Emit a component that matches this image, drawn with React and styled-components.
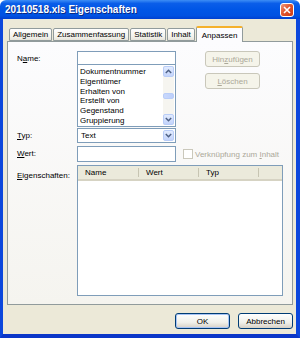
import React from "react";
import styled, { createGlobalStyle } from "styled-components";

const GlobalStyle = createGlobalStyle`
  html, body {
    margin: 0;
    padding: 0;
    background: #ffffff;
  }
  body {
    font-family: "Liberation Sans", Arial, sans-serif;
    font-size: 8px;
    color: #000;
  }
`;

const Window = styled.div`
  width: 300px;
  height: 338px;
  display: flex;
  flex-direction: column;
  overflow: hidden;
`;

const TitleBar = styled.div`
  height: 20px;
  display: flex;
  align-items: center;
  padding: 0 6px 0 5px;
  background: linear-gradient(#3d8ef5 0%, #0a5ee9 18%, #0056e6 50%, #0052e2 82%, #0040d0 100%);
  border-radius: 6px 6px 0 0;
`;

const Title = styled.span`
  flex: 1;
  font-size: 10px;
  font-weight: bold;
  color: #fff;
  text-shadow: 1px 1px 0 #0a2a86;
  white-space: nowrap;
`;

const CloseButton = styled.div`
  width: 12px;
  height: 12px;
  border: 1px solid #fff;
  border-radius: 3px;
  background: linear-gradient(135deg, #f09a7c 0%, #e0562f 45%, #cc3a12 100%);
  display: flex;
  align-items: center;
  justify-content: center;
`;

const Frame = styled.div`
  flex: 1;
  display: flex;
  flex-direction: column;
  background: #ece9d8;
  border-left: 3px solid #0c47dc;
  border-right: 4px solid #0c47dc;
  border-bottom: 4px solid #0a36c8;
  padding: 7px 0 5px 4px;
`;

const TabStrip = styled.div`
  display: flex;
  align-items: flex-end;
  height: 16px;
  padding-left: 2px;
  margin-bottom: -1px;
  position: relative;
  z-index: 1;
`;

const Tab = styled.div`
  height: ${(p) => (p.active ? "16px" : "13px")};
  margin-bottom: ${(p) => (p.active ? "0" : "1px")};
  margin-right: ${(p) => (p.active ? "0" : "1px")};
  padding: 0 ${(p) => (p.active ? "5px" : "3px")};
  box-sizing: border-box;
  display: flex;
  align-items: center;
  justify-content: center;
  border: 1px solid #919b9c;
  border-bottom: ${(p) => (p.active ? "none" : "1px solid #919b9c")};
  border-top: ${(p) => (p.active ? "2px solid #f5b12d" : "1px solid #919b9c")};
  border-radius: 2px 2px 0 0;
  background: ${(p) =>
    p.active ? "#fcfcfe" : "linear-gradient(#ffffff, #f3f2ec 70%, #e6e4da)"};
  white-space: nowrap;
`;

const Panel = styled.div`
  width: 286px;
  height: 264px;
  box-sizing: border-box;
  border: 1px solid #919b9c;
  background: linear-gradient(#fcfcfe, #f5f4ef);
  padding: 9px 8px 8px 9px;
  display: flex;
  flex-direction: column;
`;

const Row = styled.div`
  display: flex;
  align-items: flex-start;
  margin-top: ${(p) => p.gap || 0}px;
`;

const Label = styled.div`
  width: 60px;
  flex-shrink: 0;
  padding-top: ${(p) => p.top || 3}px;
  white-space: nowrap;
`;

const U = styled.span`
  text-decoration: underline;
`;

const NameBlock = styled.div`
  width: 99px;
  display: flex;
  flex-direction: column;
`;

const TextBox = styled.div`
  width: ${(p) => p.w || 99}px;
  height: ${(p) => p.h || 14}px;
  box-sizing: border-box;
  border: 1px solid #7f9db9;
  background: #fff;
`;

const ListBox = styled.div`
  height: 62px;
  box-sizing: border-box;
  border: 1px solid #7f9db9;
  border-top: none;
  background: #fff;
  display: flex;
`;

const ListItems = styled.div`
  flex: 1;
  padding: 2px 0 0 2px;
  display: flex;
  flex-direction: column;
`;

const ListItem = styled.div`
  height: 10px;
  line-height: 10px;
  white-space: nowrap;
  overflow: hidden;
`;

const ScrollBar = styled.div`
  width: 11px;
  margin: 1px 1px 1px 0;
  background: #f6f5f0;
  display: flex;
  flex-direction: column;
  justify-content: space-between;
`;

const ScrollButton = styled.div`
  width: 11px;
  height: 11px;
  box-sizing: border-box;
  border: 1px solid #b9cdf8;
  border-radius: 2px;
  background: linear-gradient(#e2ebfe, #c3d4fb);
  display: flex;
  align-items: center;
  justify-content: center;
`;

const Thumb = styled.div`
  width: 11px;
  height: 6px;
  box-sizing: border-box;
  border: 1px solid #b9cdf8;
  border-radius: 2px;
  background: linear-gradient(90deg, #c9d8fc, #bccffb);
`;

const SideButtons = styled.div`
  margin-left: 29px;
  display: flex;
  flex-direction: column;
  gap: 6px;
`;

const Button = styled.div`
  width: ${(p) => p.w || 55}px;
  height: 16px;
  box-sizing: border-box;
  border: 1px solid ${(p) => (p.disabled ? "#c9c7ba" : "#003c74")};
  border-radius: 3px;
  background: ${(p) =>
    p.disabled ? "#f5f4ea" : "linear-gradient(#ffffff, #f0f0ea 60%, #d6d0c5)"};
  color: ${(p) => (p.disabled ? "#aca899" : "#000")};
  display: flex;
  align-items: center;
  justify-content: center;
  white-space: nowrap;
  box-shadow: ${(p) => (p.focus ? "inset 0 0 0 1px #a7c4f5" : "none")};
`;

const Combo = styled.div`
  width: 99px;
  height: 15px;
  box-sizing: border-box;
  border: 1px solid #7f9db9;
  background: #fff;
  display: flex;
  align-items: center;
  padding: 0 1px 0 3px;
`;

const ComboText = styled.span`
  flex: 1;
`;

const CheckWrap = styled.div`
  display: flex;
  align-items: center;
  margin-left: 7px;
  padding-top: 3px;
  color: #aca899;
  white-space: nowrap;
`;

const CheckBox = styled.div`
  width: 10px;
  height: 10px;
  box-sizing: border-box;
  border: 1px solid #cac8bb;
  background: #fff;
  margin-right: 2px;
`;

const ListView = styled.div`
  width: 206px;
  height: 131px;
  box-sizing: border-box;
  border: 1px solid #7f9db9;
  background: #fff;
  margin-top: -3px;
`;

const Header = styled.div`
  height: 15px;
  display: flex;
  background: #ebeadb;
  border-bottom: 2px solid #d6d3c3;
  box-sizing: border-box;
`;

const HeaderCell = styled.div`
  width: ${(p) => p.w}px;
  box-sizing: border-box;
  padding-left: 7px;
  display: flex;
  align-items: center;
  border-right: 1px solid #c7c5b2;
  margin: 2px 0;
`;

const Footer = styled.div`
  display: flex;
  justify-content: flex-end;
  gap: 8px;
  margin-top: 8px;
  padding-right: 3px;
`;

const Chevron = ({ down }) => (
  <svg width="7" height="5" viewBox="0 0 7 5">
    <path
      d={down ? "M0.8 1 L3.5 3.7 L6.2 1" : "M0.8 4 L3.5 1.3 L6.2 4"}
      fill="none"
      stroke="#4d6185"
      strokeWidth="1.5"
    />
  </svg>
);

const items = [
  "Dokumentnummer",
  "Eigentümer",
  "Erhalten von",
  "Erstellt von",
  "Gegenstand",
  "Gruppierung",
];

export default function App() {
  return (
    <>
      <GlobalStyle />
      <Window>
        <TitleBar>
          <Title>20110518.xls Eigenschaften</Title>
          <CloseButton>
            <svg width="8" height="8" viewBox="0 0 8 8">
              <path d="M1 1 L7 7 M7 1 L1 7" stroke="#fff" strokeWidth="1.6" />
            </svg>
          </CloseButton>
        </TitleBar>
        <Frame>
          <TabStrip>
            <Tab>Allgemein</Tab>
            <Tab>Zusammenfassung</Tab>
            <Tab>Statistik</Tab>
            <Tab>Inhalt</Tab>
            <Tab active>Anpassen</Tab>
          </TabStrip>
          <Panel>
            <Row>
              <Label top={3}>
                N<U>a</U>me:
              </Label>
              <NameBlock>
                <TextBox />
                <ListBox>
                  <ListItems>
                    {items.map((it) => (
                      <ListItem key={it}>{it}</ListItem>
                    ))}
                  </ListItems>
                  <ScrollBar>
                    <ScrollButton>
                      <Chevron />
                    </ScrollButton>
                    <Thumb />
                    <ScrollButton>
                      <Chevron down />
                    </ScrollButton>
                  </ScrollBar>
                </ListBox>
              </NameBlock>
              <SideButtons>
                <Button disabled>
                  Hin<U>z</U>ufügen
                </Button>
                <Button disabled>
                  <U>L</U>öschen
                </Button>
              </SideButtons>
            </Row>
            <Row gap={1}>
              <Label top={3}>
                <U>T</U>yp:
              </Label>
              <Combo>
                <ComboText>Text</ComboText>
                <ScrollButton>
                  <Chevron down />
                </ScrollButton>
              </Combo>
            </Row>
            <Row gap={3}>
              <Label top={3}>
                <U>W</U>ert:
              </Label>
              <TextBox h={16} />
              <CheckWrap>
                <CheckBox />
                <span>
                  Verknüpfung zum <U>I</U>nhalt
                </span>
              </CheckWrap>
            </Row>
            <Row gap={6}>
              <Label top={0}>
                <U>E</U>igenschaften:
              </Label>
              <ListView>
                <Header>
                  <HeaderCell w={61}>Name</HeaderCell>
                  <HeaderCell w={60}>Wert</HeaderCell>
                  <HeaderCell w={60}>Typ</HeaderCell>
                </Header>
              </ListView>
            </Row>
          </Panel>
          <Footer>
            <Button focus>OK</Button>
            <Button>Abbrechen</Button>
          </Footer>
        </Frame>
      </Window>
    </>
  );
}
